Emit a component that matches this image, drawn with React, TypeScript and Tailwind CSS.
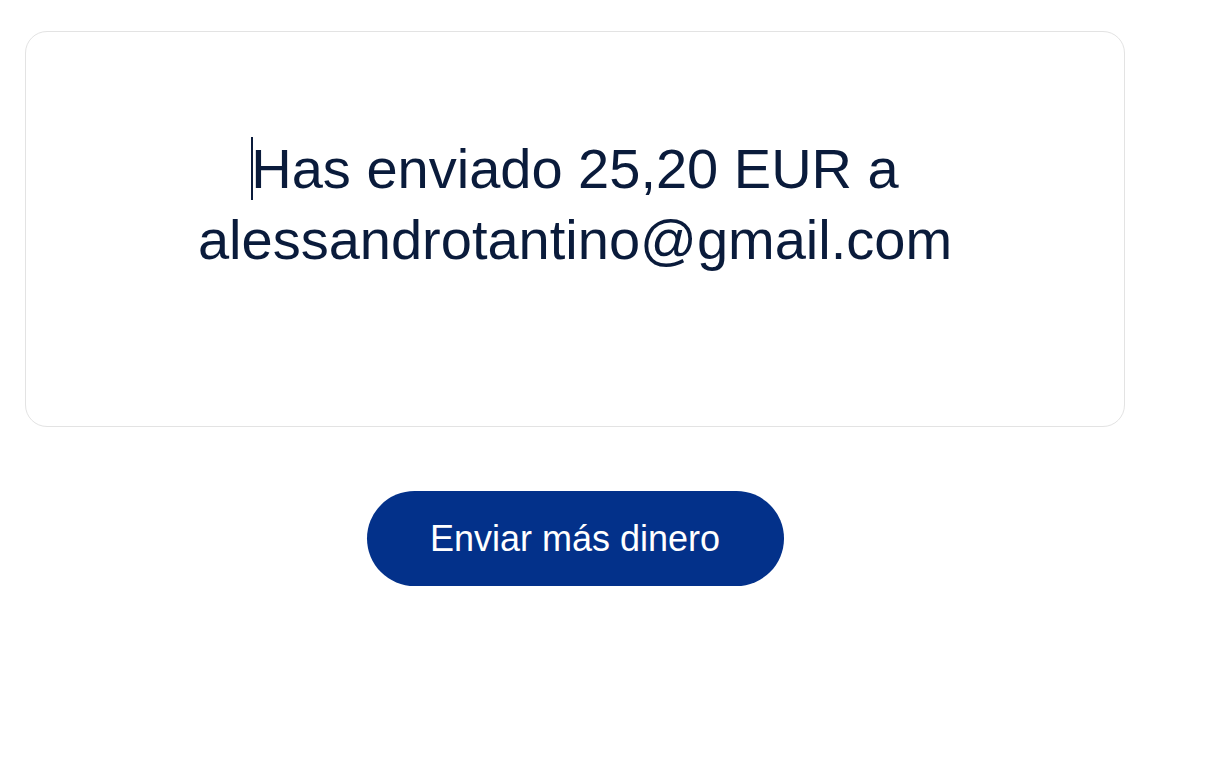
import React from "react";

export default function App() {
  return (
    <div className="min-h-[774px] w-[1216px] bg-white" style={{ fontFamily: '"Liberation Sans", Arial, sans-serif' }}>
      <div className="ml-[25px] w-[1100px] pt-[31px] flex flex-col items-center">
        <div className="w-full h-[396px] rounded-[22px] border border-[#e3e3e3] pt-[101px] px-10">
          <p className="text-center text-[56px] leading-[71px] text-[#0a1b3b]">
            <span className="relative">
              <span className="absolute left-[0px] top-[0px] h-[63px] w-[1.5px] bg-[#0a1b3b]" />
              Has enviado 25,20 EUR a
            </span>{" "}
            alessandrotantino@gmail.com
          </p>
        </div>
        <button className="mt-[64px] h-[95px] w-[417px] rounded-full bg-[#03318a] text-[36px] text-white">
          Enviar más dinero
        </button>
      </div>
    </div>
  );
}
